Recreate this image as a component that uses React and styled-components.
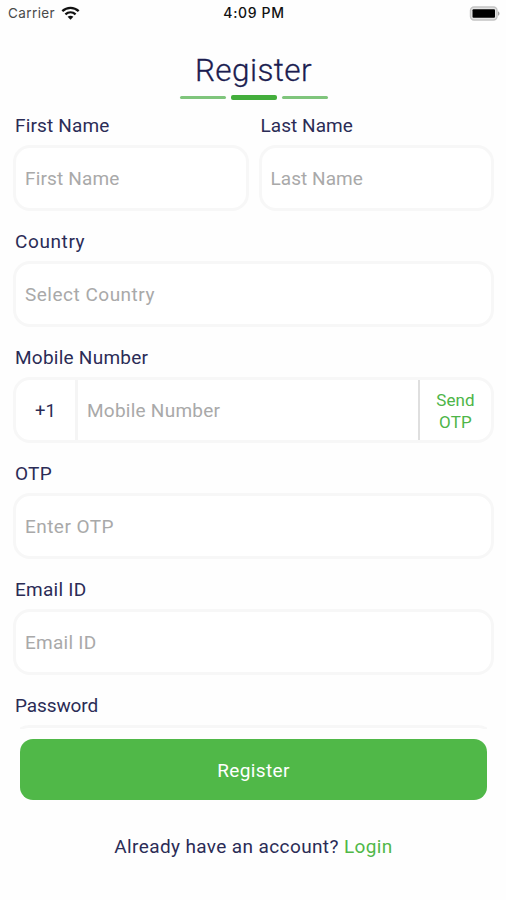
import React from "react";
import styled, { createGlobalStyle } from "styled-components";

const GlobalStyle = createGlobalStyle`
  * { box-sizing: border-box; }
  body { margin: 0; background: #fefefe; }
`;

const Screen = styled.main`
  width: 506px;
  height: 900px;
  overflow: hidden;
  display: flex;
  flex-direction: column;
  background: #fefefe;
  color: #2b2c56;
  font-family: Roboto, "Liberation Sans", sans-serif;
  font-size: 19px;
`;

const StatusBar = styled.header`
  height: 28px;
  flex: none;
  display: grid;
  grid-template-columns: 1fr auto 1fr;
  align-items: center;
  padding: 0 6px 2px 8px;
  font-family: Inter, "Liberation Sans", sans-serif;
  font-size: 13.5px;
  line-height: 26px;
  color: #111;
`;

const Carrier = styled.div`
  display: flex;
  align-items: center;
  gap: 6px;
  color: #4a4a4a;
  letter-spacing: 0.4px;
`;

const Clock = styled.time`
  font-size: 14px;
  font-weight: 500;
  letter-spacing: 0.65px;
`;

const BatteryIcon = styled.svg`
  justify-self: end;
`;

const TitleBlock = styled.div`
  flex: none;
  height: 72px;
  display: flex;
  flex-direction: column;
  align-items: center;
  padding: 23px 0 0 1px;
`;

const Title = styled.h1`
  margin: 0;
  font-size: 31.5px;
  font-weight: 300;
  line-height: 40px;
  letter-spacing: 0.4px;
  color: #1b1d50;
  -webkit-text-stroke: 0.3px #1b1d50;
`;

const Steps = styled.div`
  display: flex;
  align-items: center;
  gap: 5px;
  height: 5px;
  margin-top: 4px;
`;

const Step = styled.span`
  width: 46px;
  height: ${(p) => (p.$active ? 5 : 3)}px;
  border-radius: 2px;
  background: ${(p) => (p.$active ? "#43ae3c" : "#7fc57c")};
`;

const Form = styled.form`
  flex: none;
  height: 629px;
  overflow: hidden;
  padding: 9px 12px 0 13px;
`;

const FieldRow = styled.div`
  display: flex;
  gap: 10px;
`;

const Field = styled.div`
  flex: 1 1 0;
  height: 116px;
`;

const Label = styled.label`
  display: block;
  height: 36px;
  padding-left: 2px;
  line-height: 34px;
  white-space: nowrap;
  letter-spacing: ${(p) => p.$spacing ?? 0.25}px;
`;

const InputBox = styled.div`
  height: 66px;
  display: flex;
  border: 3px solid #f7f7f7;
  border-radius: 17px;
  background: #fff;
`;

const Placeholder = styled.span`
  flex: 1;
  padding-left: 9px;
  line-height: 62px;
  color: #a9a9a9;
  letter-spacing: ${(p) => p.$spacing ?? 0.25}px;
`;

const DialCode = styled.span`
  width: 62px;
  border-right: 3px solid #f5f5f5;
  text-align: center;
  line-height: 62px;
  font-size: 18.5px;
`;

const SendOtp = styled.button`
  width: 73px;
  margin: 0;
  padding: 1px 0 0;
  border: 0;
  border-left: 2px solid #dfdfdf;
  background: transparent;
  color: #4db548;
  font: inherit;
  font-size: 17px;
  line-height: 22px;
  letter-spacing: 0.15px;
`;

const SubmitButton = styled.button`
  flex: none;
  width: 467px;
  height: 61px;
  margin: 10px 0 0 20px;
  padding: 1px 0 0;
  border: 0;
  border-radius: 13px;
  background: #50b848;
  color: #fff;
  font: inherit;
  letter-spacing: 0.35px;
`;

const LoginPrompt = styled.p`
  margin: 30px 0 0 1px;
  line-height: 33px;
  text-align: center;
  letter-spacing: 0.38px;
`;

const LoginLink = styled.a`
  color: #50b848;
`;

const PasswordBox = styled(InputBox)`
  margin: 0 -1px;
  clip-path: inset(0 8px);
`;

export default function App() {
  return (
    <Screen>
      <GlobalStyle />
      <StatusBar>
        <Carrier>
          <span>Carrier</span>
          <svg width="19" height="14" viewBox="0 0 19 14" fill="none" stroke="#111" strokeWidth="2.3">
            <path d="M1.3 5.2C6 .7 13 .7 17.7 5.2" />
            <path d="M4.4 8.3c3-2.7 7.2-2.7 10.2 0" />
            <path d="M6.6 10.8c1.7-1.5 4.1-1.5 5.8 0L9.5 13.7z" fill="#111" stroke="none" />
          </svg>
        </Carrier>
        <Clock>4:09 PM</Clock>
        <BatteryIcon width="31" height="15" viewBox="0 0 31 15">
          <rect x="1.5" y="1" width="26.5" height="13" rx="3.5" fill="#e4e4e4" stroke="#c4c4c4" strokeWidth="1.4" />
          <rect x="3.5" y="3.3" width="22.5" height="8.4" rx="1" fill="#000" />
          <path d="M29 5.2c2 .9 2 3.7 0 4.6z" fill="#a5a5a5" />
        </BatteryIcon>
      </StatusBar>
      <TitleBlock>
        <Title>Register</Title>
        <Steps>
          <Step />
          <Step $active />
          <Step />
        </Steps>
      </TitleBlock>
      <Form>
        <FieldRow>
          <Field>
            <Label $spacing={0.15}>First Name</Label>
            <InputBox><Placeholder $spacing={0.15}>First Name</Placeholder></InputBox>
          </Field>
          <Field>
            <Label $spacing={0.05}>Last Name</Label>
            <InputBox><Placeholder $spacing={0.05}>Last Name</Placeholder></InputBox>
          </Field>
        </FieldRow>
        <Field>
          <Label $spacing={0.6}>Country</Label>
          <InputBox><Placeholder $spacing={0.5}>Select Country</Placeholder></InputBox>
        </Field>
        <Field>
          <Label>Mobile Number</Label>
          <InputBox>
            <DialCode>+1</DialCode>
            <Placeholder>Mobile Number</Placeholder>
            <SendOtp type="button">Send<br />OTP</SendOtp>
          </InputBox>
        </Field>
        <Field>
          <Label>OTP</Label>
          <InputBox><Placeholder $spacing={0.45}>Enter OTP</Placeholder></InputBox>
        </Field>
        <Field>
          <Label>Email ID</Label>
          <InputBox><Placeholder>Email ID</Placeholder></InputBox>
        </Field>
        <Field>
          <Label $spacing={-0.1}>Password</Label>
          <PasswordBox />
        </Field>
      </Form>
      <SubmitButton type="button">Register</SubmitButton>
      <LoginPrompt>
        Already have an account? <LoginLink>Login</LoginLink>
      </LoginPrompt>
    </Screen>
  );
}
